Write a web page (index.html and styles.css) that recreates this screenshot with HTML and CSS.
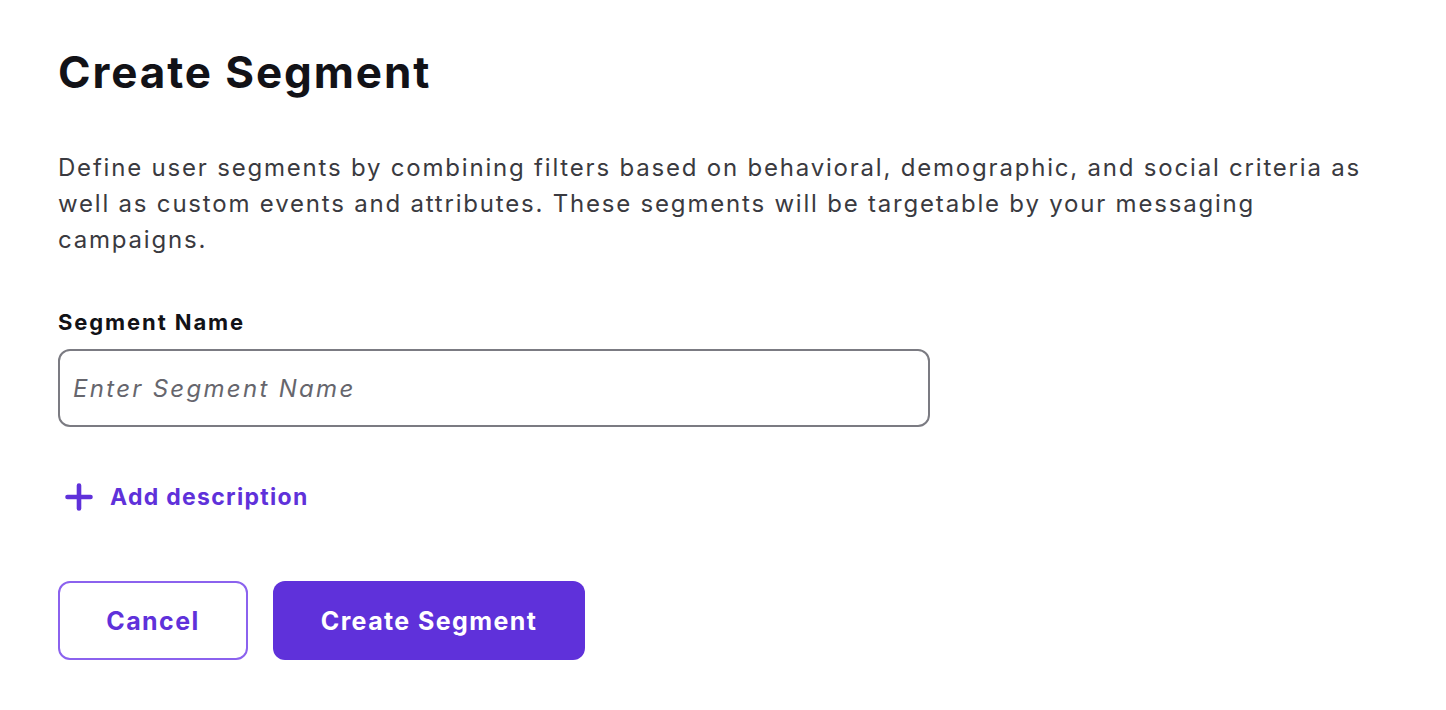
FILE: index.html
```html
<!DOCTYPE html>
<html lang="en">
<head>
<meta charset="utf-8">
<title>Create Segment</title>
<link rel="stylesheet" href="styles.css">
</head>
<body>
<main class="page">
  <h1 class="title">Create Segment</h1>
  <p class="intro">Define user segments by combining filters based on behavioral, demographic, and social criteria as well as custom events and attributes. These segments will be targetable by your messaging campaigns.</p>
  <div class="field">
    <label class="label" for="segname">Segment Name</label>
    <input class="input" id="segname" type="text" placeholder="Enter Segment Name">
  </div>
  <button class="add-desc" type="button">
    <svg class="plus" width="28" height="28" viewBox="0 0 28 28" aria-hidden="true"><path d="M14 2.5v23M2.5 14h23" stroke="currentColor" stroke-width="4.6" stroke-linecap="round"/></svg>
    <span>Add description</span>
  </button>
  <div class="actions">
    <button class="btn btn-secondary" type="button">Cancel</button>
    <button class="btn btn-primary" type="button">Create Segment</button>
  </div>
</main>
</body>
</html>
```
FILE: styles.css
```css
html, body {
  margin: 0;
  padding: 0;
  background: #ffffff;
}
body {
  font-family: Inter, "Noto Sans", sans-serif;
  color: #131318;
}
.page {
  padding: 40px 62px 40px 58px;
}
.title {
  margin: 0;
  font-size: 44px;
  line-height: 64px;
  font-weight: 700;
  letter-spacing: 1.9px;
  color: #121217;
}
.intro {
  margin: 46px 0 0;
  font-size: 24px;
  line-height: 36px;
  letter-spacing: 1.8px;
  color: #3a3a40;
  font-weight: 400;
}
.field {
  display: flex;
  flex-direction: column;
  margin-top: 49px;
  width: 872px;
}
.label {
  font-size: 22px;
  line-height: 30px;
  font-weight: 700;
  letter-spacing: 1.9px;
  color: #121217;
  margin-bottom: 12px;
}
.input {
  box-sizing: border-box;
  height: 78px;
  border: 2px solid #7b7b82;
  border-radius: 12px;
  padding: 0 13px;
  font-family: inherit;
  font-size: 24px;
  letter-spacing: 2.3px;
  color: #121217;
  background: #fff;
  outline: none;
}
.input::placeholder {
  font-style: italic;
  color: #66666d;
}
.add-desc {
  display: flex;
  align-items: center;
  gap: 17px;
  margin-top: 56px;
  padding: 0 0 0 7px;
  border: 0;
  background: none;
  color: #5f31da;
  font-family: inherit;
  font-size: 23px;
  font-weight: 700;
  letter-spacing: 1.3px;
  cursor: pointer;
}
.actions {
  display: flex;
  gap: 25px;
  margin-top: 70px;
}
.btn {
  box-sizing: border-box;
  height: 79px;
  border-radius: 12px;
  font-family: inherit;
  font-size: 25px;
  font-weight: 700;
  letter-spacing: 1.4px;
  cursor: pointer;
}
.btn-secondary {
  width: 190px;
  background: #ffffff;
  border: 2px solid #8b62ee;
  color: #5f31da;
}
.btn-primary {
  width: 312px;
  background: #5f31da;
  border: 0;
  color: #ffffff;
}
```
